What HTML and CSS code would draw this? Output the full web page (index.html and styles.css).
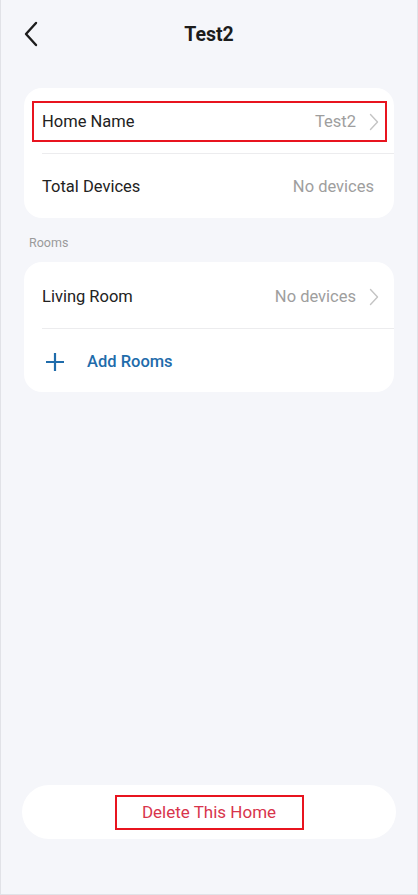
FILE: index.html
```html
<!DOCTYPE html>
<html lang="en">
<head>
<meta charset="utf-8">
<title>Test2</title>
<link rel="stylesheet" href="styles.css">
</head>
<body>
<div class="screen">
  <header class="topbar">
    <button class="back" aria-label="Back">
      <svg width="14" height="26" viewBox="0 0 14 26"><path d="M12 2 L2 13 L12 24" fill="none" stroke="#1c1c1c" stroke-width="2.4" stroke-linecap="round" stroke-linejoin="round"/></svg>
    </button>
    <h1 class="title">Test2</h1>
  </header>

  <section class="card">
    <div class="row row-first">
      <span class="label">Home Name</span>
      <span class="value">Test2</span>
      <svg class="chev" width="10" height="18" viewBox="0 0 10 18"><path d="M1.5 1.5 L8.5 9 L1.5 16.5" fill="none" stroke="#c4c4c4" stroke-width="1.4" stroke-linecap="round" stroke-linejoin="round"/></svg>
      <span class="mark"></span>
    </div>
    <div class="divider"></div>
    <div class="row">
      <span class="label">Total Devices</span>
      <span class="value">No devices</span>
    </div>
  </section>

  <div class="section-title">Rooms</div>

  <section class="card card-rooms">
    <div class="row row-room">
      <span class="label">Living Room</span>
      <span class="value">No devices</span>
      <svg class="chev" width="10" height="18" viewBox="0 0 10 18"><path d="M1.5 1.5 L8.5 9 L1.5 16.5" fill="none" stroke="#c4c4c4" stroke-width="1.4" stroke-linecap="round" stroke-linejoin="round"/></svg>
    </div>
    <div class="divider"></div>
    <div class="row row-add">
      <svg class="plus" width="20" height="20" viewBox="0 0 20 20"><path d="M10 1 V19 M1 10 H19" fill="none" stroke="#1f6cab" stroke-width="2.2"/></svg>
      <span class="add-label">Add Rooms</span>
    </div>
  </section>

  <div class="spacer"></div>

  <button class="delete">
    <span class="delete-text">Delete This Home</span>
    <span class="mark mark-delete"></span>
  </button>
</div>
</body>
</html>
```

FILE: styles.css
```css
* { box-sizing: border-box; }

html, body {
  margin: 0;
  padding: 0;
  background: #f5f6fa;
}

body {
  font-family: Roboto, "Noto Sans", "Liberation Sans", sans-serif;
  color: #222;
}

.screen {
  height: 895px;
  display: flex;
  flex-direction: column;
  border-left: 1px solid #e1e2e7;
  border-right: 1px solid #e1e2e7;
  border-bottom: 1px solid #e1e2e7;
  background: #f5f6fa;
}

.topbar {
  height: 68px;
  position: relative;
  display: flex;
  align-items: center;
  justify-content: center;
  flex-shrink: 0;
}

.back {
  position: absolute;
  left: 23px;
  top: 21px;
  padding: 0;
  border: 0;
  background: none;
  display: flex;
}

.title {
  margin: 0;
  font-size: 19.5px;
  font-weight: 700;
  color: #1c1c1c;
}

.card {
  margin: 20px 23px 0 23px;
  background: #fff;
  border-radius: 18px;
  overflow: hidden;
}

.row {
  position: relative;
  height: 64px;
  display: flex;
  align-items: center;
  padding: 0 20px 0 18px;
}

.row-first { height: 65px; padding-top: 2px; padding-right: 15px; }
.row-room { height: 66px; padding-top: 3px; padding-right: 15px; }
.row-add { height: 63px; padding-top: 2px; padding-left: 21px; }

.label {
  flex: 1;
  font-size: 16.5px;
  color: #222;
}

.value {
  font-size: 16.5px;
  color: #9e9e9e;
}

.chev {
  margin-left: 13px;
  flex-shrink: 0;
}

.divider {
  height: 1px;
  margin-left: 18px;
  background: #ececee;
}

.mark {
  position: absolute;
  left: 8px;
  right: 7px;
  top: 13px;
  bottom: 11px;
  border: 2px solid #e8141f;
  pointer-events: none;
}

.section-title {
  margin: 17px 0 0 28px;
  font-size: 12.5px;
  color: #9a9a9a;
  line-height: 16px;
}

.card-rooms {
  margin-top: 11px;
}

.plus {
  flex-shrink: 0;
}

.add-label {
  margin-left: 22px;
  font-size: 16.5px;
  font-weight: 500;
  color: #1f6cab;
}

.spacer {
  flex: 1;
}

.delete {
  position: relative;
  margin: 0 21px 55px 21px;
  height: 54px;
  border: 0;
  border-radius: 27px;
  background: #fff;
  display: flex;
  align-items: center;
  justify-content: center;
  padding: 0;
  font-family: inherit;
}

.delete-text {
  font-size: 17px;
  color: #d8344c;
}

.mark-delete {
  left: 93px;
  right: 92px;
  top: 10px;
  bottom: 9px;
}
```
